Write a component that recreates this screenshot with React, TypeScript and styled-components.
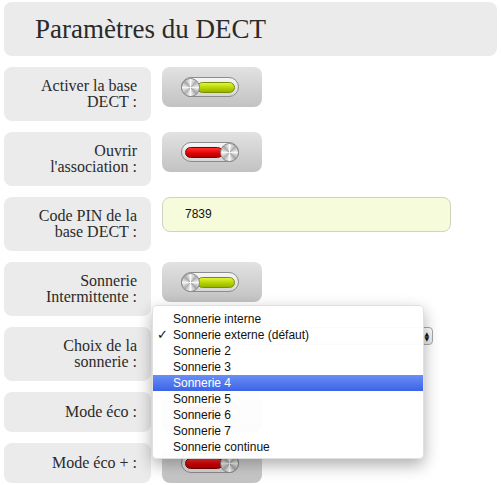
import styled, { createGlobalStyle } from 'styled-components';

const GlobalStyle = createGlobalStyle`
  body {
    margin: 0;
    background: #fff;
    font-family: "Liberation Serif", "Times New Roman", serif;
    color: #222;
  }
`;

const Page = styled.div`
  padding: 2px 4px;
  display: flex;
  flex-direction: column;
  gap: 11px;
`;

const Header = styled.h1`
  margin: 0;
  height: 54px;
  box-sizing: border-box;
  padding-left: 31px;
  display: flex;
  align-items: center;
  background: #ebebeb;
  border-radius: 8px;
  font-size: 27px;
  font-weight: normal;
  color: #2a2a2a;
`;

const Row = styled.div`
  display: flex;
  align-items: flex-start;
  gap: 11px;
`;

const Label = styled.div`
  width: 147px;
  min-height: 40px;
  box-sizing: border-box;
  padding: 11px 14px 11px 8px;
  display: flex;
  align-items: center;
  justify-content: flex-end;
  text-align: right;
  background: #ebebeb;
  border-radius: 8px;
  font-size: 16px;
  line-height: 16px;
  color: #2a2a2a;
`;

const SwitchButton = styled.div`
  width: 100px;
  height: 40px;
  border-radius: 8px;
  background: linear-gradient(#e2e2e2, #c2c2c2);
  display: flex;
  align-items: center;
  justify-content: center;
  padding-right: 4px;
  box-sizing: border-box;
`;

const Track = styled.div<{ $on: boolean }>`
  width: 58px;
  height: 20px;
  box-sizing: border-box;
  border: 1px solid #8c8c8c;
  border-radius: 10px;
  background: linear-gradient(#f6f6f6, #d6d6d6);
  display: flex;
  flex-direction: ${p => (p.$on ? 'row' : 'row-reverse')};
  align-items: center;
  padding: ${p => (p.$on ? '0 3px 0 0' : '0 0 0 3px')};
`;

const Knob = styled.div`
  width: 19px;
  height: 19px;
  margin: -1px;
  flex: none;
  box-sizing: border-box;
  border-radius: 50%;
  border: 1px solid #8a8a8a;
  background: conic-gradient(
    #fafafa, #aeaeae 45deg, #f6f6f6 90deg, #a6a6a6 135deg,
    #fafafa 180deg, #b0b0b0 225deg, #f6f6f6 270deg, #a8a8a8 315deg, #fafafa
  );
  position: relative;
  z-index: 1;
`;

const Bar = styled.div<{ $on: boolean }>`
  flex: 1;
  height: 11px;
  box-sizing: border-box;
  border-radius: 6px;
  margin: ${p => (p.$on ? '0 0 0 -2px' : '0 -2px 0 0')};
  border: 1px solid ${p => (p.$on ? '#7a8c00' : '#7a0000')};
  background: ${p =>
    p.$on ? 'linear-gradient(#e2f53a, #b2d000 60%, #98b400)' : 'linear-gradient(#ff3030, #e00000 60%, #b00000)'};
`;

const PinInput = styled.div`
  width: 289px;
  height: 35px;
  box-sizing: border-box;
  border: 1px solid #cfd4bd;
  border-radius: 8px;
  background: #f6fbdc;
  padding-left: 22px;
  padding-bottom: 2px;
  display: flex;
  align-items: center;
  font-family: "Liberation Sans", Arial, sans-serif;
  font-size: 12px;
  color: #111;
`;

const SelectCell = styled.div`
  position: relative;
`;

const Select = styled.div`
  width: 271px;
  height: 18px;
  box-sizing: border-box;
  border: 1px solid #a8a8a8;
  border-radius: 4px;
  background: linear-gradient(#ffffff, #e6e6e6);
  display: flex;
  align-items: center;
  justify-content: flex-end;
  padding: 0 3px 0 8px;
  color: #111;
`;

const Arrows = styled.span`
  display: flex;
  flex-direction: column;
  font-family: "DejaVu Sans", sans-serif;
  font-size: 6px;
  line-height: 5px;
  color: #111;
`;

const Menu = styled.ul`
  position: absolute;
  left: -10px;
  top: -22px;
  width: 272px;
  margin: 0;
  padding: 5px 0 3px;
  list-style: none;
  box-sizing: border-box;
  background: rgba(255, 255, 255, 0.95);
  border: 1px solid rgba(0, 0, 0, 0.12);
  border-radius: 5px;
  box-shadow: 0 6px 16px rgba(0, 0, 0, 0.32);
  font-family: "Liberation Sans", Arial, sans-serif;
  font-size: 12px;
  z-index: 5;
`;

const MenuItem = styled.li<{ $active?: boolean }>`
  position: relative;
  height: 16px;
  line-height: 16px;
  padding-left: 20px;
  color: ${p => (p.$active ? '#fff' : '#111')};
  background: ${p => (p.$active ? 'linear-gradient(#6a8ef6, #3c63e6)' : 'transparent')};
`;

const Check = styled.span`
  position: absolute;
  left: 4px;
  top: 0;
  font-family: "DejaVu Sans", sans-serif;
  font-size: 13px;
  font-weight: bold;
`;

const Switch = ({ on }: { on: boolean }) => (
  <SwitchButton>
    <Track $on={on}>
      <Knob />
      <Bar $on={on} />
    </Track>
  </SwitchButton>
);

const options = [
  'Sonnerie interne',
  'Sonnerie externe (défaut)',
  'Sonnerie 2',
  'Sonnerie 3',
  'Sonnerie 4',
  'Sonnerie 5',
  'Sonnerie 6',
  'Sonnerie 7',
  'Sonnerie continue',
];

export default function App() {
  return (
    <>
      <GlobalStyle />
      <Page>
        <Header>Paramètres du DECT</Header>
        <Row>
          <Label>Activer la base<br />DECT :</Label>
          <Switch on />
        </Row>
        <Row>
          <Label>Ouvrir<br />l'association :</Label>
          <Switch on={false} />
        </Row>
        <Row>
          <Label>Code PIN de la<br />base DECT :</Label>
          <PinInput>7839</PinInput>
        </Row>
        <Row>
          <Label>Sonnerie<br />Intermittente :</Label>
          <Switch on />
        </Row>
        <Row>
          <Label>Choix de la<br />sonnerie :</Label>
          <SelectCell>
            <Select>
              <Arrows>
                <span>▲</span>
                <span>▼</span>
              </Arrows>
            </Select>
            <Menu>
              {options.map((o, i) => (
                <MenuItem key={o} $active={i === 4}>
                  {i === 1 && <Check>✓</Check>}
                  {o}
                </MenuItem>
              ))}
            </Menu>
          </SelectCell>
        </Row>
        <Row>
          <Label>Mode éco :</Label>
          <Switch on={false} />
        </Row>
        <Row>
          <Label>Mode éco + :</Label>
          <Switch on={false} />
        </Row>
      </Page>
    </>
  );
}
